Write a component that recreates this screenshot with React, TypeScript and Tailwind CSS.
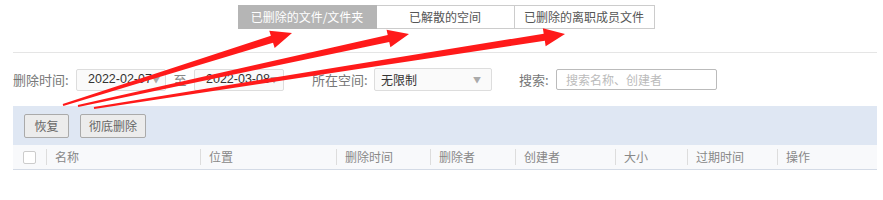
import React from 'react';

const font = { fontFamily: '"Noto Sans CJK SC", "Liberation Sans", sans-serif' };

const tabs = ['已删除的文件/文件夹', '已解散的空间', '已删除的离职成员文件'];

const columns = [
  { label: '名称', w: 'w-[154px]' },
  { label: '位置', w: 'w-[136px]' },
  { label: '删除时间', w: 'w-[94px]' },
  { label: '删除者', w: 'w-[85px]' },
  { label: '创建者', w: 'w-[100px]' },
  { label: '大小', w: 'w-[72px]' },
  { label: '过期时间', w: 'w-[90px]' },
  { label: '操作', w: 'flex-1' },
];

// tapered arrow polygon from tail to tip
function arrowPoints(x1: number, y1: number, x2: number, y2: number) {
  const dx = x2 - x1;
  const dy = y2 - y1;
  const len = Math.sqrt(dx * dx + dy * dy);
  const ux = dx / len;
  const uy = dy / len;
  const nx = -uy;
  const ny = ux;
  const headLen = 21;
  const headW = 9;
  const shaftW = 3.6;
  const tailW = 1;
  const bx = x2 - ux * headLen;
  const by = y2 - uy * headLen;
  const pts = [
    [x1 + nx * tailW, y1 + ny * tailW],
    [bx + nx * shaftW, by + ny * shaftW],
    [bx + nx * headW, by + ny * headW],
    [x2, y2],
    [bx - nx * headW, by - ny * headW],
    [bx - nx * shaftW, by - ny * shaftW],
    [x1 - nx * tailW, y1 - ny * tailW],
  ];
  return pts.map((p) => p.join(',')).join(' ');
}

function Caret() {
  return <span className="text-[8px] text-[#aaa] leading-none">▼</span>;
}

function DateBox({ value }: { value: string }) {
  return (
    <div className="w-[90px] h-[22px] flex items-center justify-between pl-[11px] pr-[8px] border border-[#ddd] rounded-[2px] bg-[#fafafa] text-[#333] text-[12.5px] whitespace-nowrap">
      <span style={{ fontFamily: '"Liberation Sans", sans-serif' }}>{value}</span>
      <Caret />
    </div>
  );
}

export default function App() {
  return (
    <div className="relative w-[883px] h-[200px] bg-white overflow-hidden" style={font}>
      <div className="ml-[13px] w-[864px]">
        {/* Tabs */}
        <div className="flex justify-center pt-[5px] pl-[2px]">
          <div className="flex h-[24px] text-[12px]">
            <div className="w-[139px] flex items-center justify-center bg-[#b5b5b5] text-white border border-[#b5b5b5]">
              {tabs[0]}
            </div>
            <div className="w-[138px] flex items-center justify-center text-[#555] border-y border-r border-[#ccc]">
              {tabs[1]}
            </div>
            <div className="w-[140px] flex items-center justify-center text-[#555] border-y border-r border-[#ccc]">
              {tabs[2]}
            </div>
          </div>
        </div>

        <div className="mt-[23px] h-px bg-[#e5e5e5]" />

        {/* Filters */}
        <div className="flex items-center h-[53px] text-[13px] text-[#777]">
          <span className="w-[63px]">删除时间:</span>
          <DateBox value="2022-02-07" />
          <span className="w-[28px] text-center text-[#888]">至</span>
          <DateBox value="2022-03-08" />
          <span className="ml-[28px] w-[62px]">所在空间:</span>
          <div className="w-[118px] h-[23px] flex items-center justify-between pl-[6px] pr-[10px] border border-[#ddd] rounded-[2px] bg-[#fafafa] text-[#333] text-[12px]">
            <span>无限制</span>
            <Caret />
          </div>
          <span className="ml-[27px] w-[37px]">搜索:</span>
          <div className="w-[161px] h-[21px] flex items-center px-[9px] border border-[#bbb] rounded-[2px] text-[12px] text-[#bbb]">
            搜索名称、创建者
          </div>
        </div>

        {/* Toolbar */}
        <div className="h-[39px] bg-[#dfe7f3] flex items-center gap-[11px] pl-[11px]">
          <button className="w-[45px] h-[24px] border border-[#aaa] rounded-[2px] bg-[#ececec] text-[12px] text-[#666]">
            恢复
          </button>
          <button className="w-[66px] h-[24px] border border-[#aaa] rounded-[2px] bg-[#ececec] text-[12px] text-[#666]">
            彻底删除
          </button>
        </div>

        {/* Table header */}
        <div className="h-[25px] bg-[#f8f9fb] border-b border-[#d4dbe6] flex items-center text-[12px] text-[#888]">
          <div className="w-[33px] flex items-center pl-[10px]">
            <span className="w-[13px] h-[13px] border border-[#ccc] rounded-[2px] bg-white" />
          </div>
          {columns.map((c) => (
            <div key={c.label} className={`${c.w} flex items-center h-[16px] border-l border-[#ddd] pl-[8px]`}>
              {c.label}
            </div>
          ))}
        </div>
      </div>

      {/* Red arrows */}
      <svg className="absolute inset-0 pointer-events-none" width="883" height="200">
        <polygon points={arrowPoints(63, 105, 292, 33)} fill="#ff1a1a" />
        <polygon points={arrowPoints(78, 106, 409, 34)} fill="#ff1a1a" />
        <polygon points={arrowPoints(94, 108, 565, 34)} fill="#ff1a1a" />
      </svg>
    </div>
  );
}
